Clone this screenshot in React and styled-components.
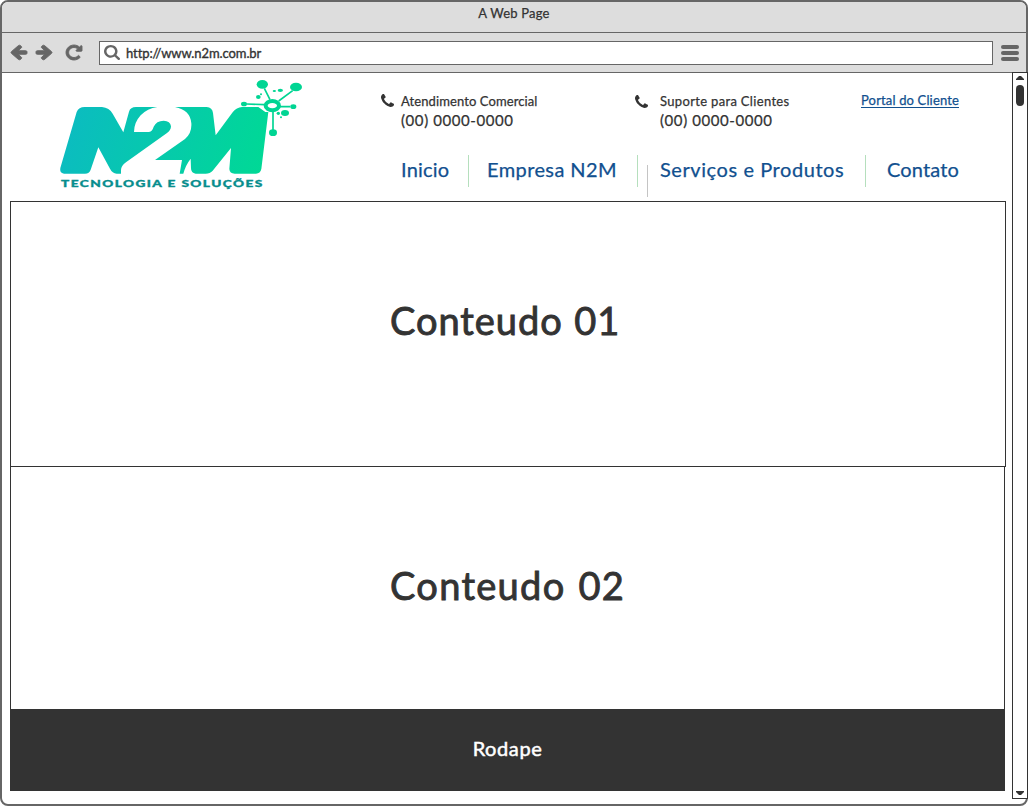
import React from "react";
import styled, { createGlobalStyle } from "styled-components";

const INK = "#333333";
const CHROME = "#666666";
const LINK = "#11508f";

const GlobalStyle = createGlobalStyle`
  * { box-sizing: border-box; }
  body { margin: 0; background: #fff; font-family: Lato, "Liberation Sans", sans-serif; color: ${INK}; }
`;

const Window = styled.div`
  width: 1028px;
  height: 806px;
  display: flex;
  flex-direction: column;
  border: 2px solid ${CHROME};
  border-radius: 8px;
  background: #fff;
`;

const Text = styled.span`
  display: block;
  white-space: nowrap;
  font-size: ${(p) => p.$size}px;
  line-height: ${(p) => p.$line || p.$size}px;
  letter-spacing: ${(p) => p.$track || 0}px;
  word-spacing: ${(p) => p.$word || 0}px;
  -webkit-text-stroke: ${(p) => p.$stroke || 0.25}px currentColor;
`;

const TitleBar = styled.header`
  flex: none;
  height: 31px;
  padding: 2px 0 0 0;
  display: flex;
  justify-content: center;
  background: #ddd;
  border-bottom: 1px solid ${CHROME};
  border-radius: 6px 6px 0 0;
`;

const Toolbar = styled.div`
  flex: none;
  height: 40px;
  display: flex;
  align-items: center;
  padding-left: 9px;
  background: #ddd;
  border-bottom: 1px solid ${CHROME};
`;

const NavIcons = styled.div`
  width: 88px;
  display: flex;
  align-items: center;
  gap: 9px;
  svg { overflow: visible; }
  svg:last-child { margin-left: 5px; }
`;

const AddressBar = styled.div`
  width: 894px;
  height: 24px;
  display: flex;
  align-items: center;
  gap: 6px;
  padding-left: 4px;
  border: 1px solid ${CHROME};
  background: #fff;
  svg { overflow: visible; }
`;

const MenuButton = styled.div`
  margin-left: 8px;
  display: grid;
  gap: 2px;
`;

const MenuBar = styled.i`
  width: 18px;
  height: 4px;
  border-radius: 2px;
  background: ${CHROME};
`;

const Viewport = styled.div`
  flex: 1;
  display: flex;
  justify-content: space-between;
  min-height: 0;
`;

const Page = styled.main`
  width: 996px;
  margin-left: 8px;
  display: flex;
  flex-direction: column;
`;

const SiteHeader = styled.div`
  flex: none;
  height: 128px;
  display: flex;
`;

const Brand = styled.div`
  width: 371px;
  padding: 1px 0 0 40px;
  svg { display: block; }
`;

const HeaderBody = styled.div`
  flex: 1;
  display: flex;
  flex-direction: column;
`;

const ContactRow = styled.div`
  height: 82px;
  padding-top: 19px;
  display: flex;
  align-items: flex-start;
`;

const Contact = styled.div`
  width: ${(p) => p.$width}px;
  display: flex;
  gap: ${(p) => p.$gap}px;
  svg { flex: none; margin-top: ${(p) => p.$drop}px; }
`;

const PortalLink = styled.a`
  width: 98px;
  margin-top: 1px;
  color: ${LINK};
  border-bottom: 1px solid ${LINK};
`;

const Menu = styled.nav`
  display: flex;
  align-items: flex-start;
  padding-left: 20px;
  color: ${LINK};
`;

const MenuItem = styled.div`
  width: ${(p) => p.$width}px;
  padding-top: 2px;
`;

const Divider = styled.i`
  width: 1px;
  height: 32px;
  margin: ${(p) => p.$drop || 0}px ${(p) => p.$after}px 0 0;
  background: ${(p) => p.$color || "#b5dfbd"};
`;

const Section = styled.section`
  flex: none;
  width: ${(p) => p.$width}px;
  height: ${(p) => p.$height}px;
  padding: ${(p) => p.$top}px 0 0 379px;
  border: 1px solid ${INK};
  border-bottom-width: ${(p) => (p.$open ? 0 : 1)}px;
  border-top-width: ${(p) => (p.$open ? 0 : 1)}px;
`;

const Footer = styled.footer`
  flex: none;
  width: 995px;
  height: 82px;
  display: flex;
  justify-content: center;
  padding-top: 27px;
  background: ${INK};
  color: #fff;
`;

const ScrollBar = styled.div`
  width: 16px;
  height: 727px;
  margin: -1px -2px 0 0;
  display: flex;
  flex-direction: column;
  align-items: center;
  padding: 3px 0;
  border: 1px solid ${INK};
  background: #fff;
`;

const Thumb = styled.div`
  width: 8px;
  height: 21px;
  margin: 5px 0 auto;
  border-radius: 4px;
  background: ${INK};
`;

const Glyph = ({ path, box, size, height, flip, weight = 0 }) => (
  <svg width={size} height={height || size} viewBox={box} preserveAspectRatio="none" fill={CHROME} stroke={CHROME} strokeWidth={weight}>
    <path d={path} transform={flip} />
  </svg>
);

const ARROW = "M1472 736v128q0 53-32.5 90.5t-84.5 37.5h-704l293 294q38 36 38 90t-38 90l-75 76q-37 37-90 37-52 0-91-37l-651-652q-37-37-37-90 0-52 37-91l651-650q38-38 91-38 52 0 90 38l75 74q38 38 38 91t-38 91l-293 293h704q52 0 84.5 37.5t32.500 90.500z";
const RELOAD = "M1536 128v448q0 26-19 45t-45 19h-448q-42 0-59-40-17-39 14-69l138-138q-148-137-349-137-104 0-198.500 40.500t-163.500 109.500-109.500 163.500-40.500 198.500 40.500 198.500 109.500 163.500 163.500 109.500 198.500 40.500q119 0 225-52t179-147q7-10 23-12 14 0 25 9l137 138q9 8 9.500 20.500t-7.500 22.500q-109 132-264 204.500t-327 72.500q-156 0-298-61t-245-164-164-245-61-298 61-298 164-245 245-164 298-61q147 0 284.500 55.500t244.500 156.500l130-129q29-31 70-14 39 17 39 59z";
const SEARCH = "M1152 704q0-185-131.500-316.500t-316.500-131.500-316.500 131.500-131.500 316.500 131.500 316.500 316.500 131.500 316.500-131.500 131.500-316.500zm512 832q0 52-38 90t-90 38q-54 0-90-38l-343-342q-179 124-399 124-143 0-273.500-55.500t-225-150-150-225-55.500-273.500 55.500-273.500 150-225 225-150 273.500-55.500 273.500 55.500 225 150 150 225 55.500 273.500q0 220-124 399l343 343q37 37 37 90z";
const PHONE = "M1408 1112q0 27-10 70.500t-21 68.500q-21 50-122 106-94 51-186 51-27 0-52.500-3.500t-57.500-12.500-47.500-14.500-55.500-20.500-49-18q-98-35-175-83-128-79-264.500-215.500t-215.500-264.500q-48-77-83-175-3-9-18-49t-20.500-55.500-14.500-47.500-12.500-57.500-3.500-52.500q0-92 51-186 56-101 106-122 25-11 68.500-21t70.500-10q14 0 21 3 18 6 53 76 11 19 30 54t35 63.500 31 53.500q3 4 17.500 25t21.500 35.500 7 28.500q0 20-28.500 50t-62 55-62 53-28.500 46q0 9 5 22.500t8.500 20.500 14 24 11.500 19q76 137 174 235t235 174q2 1 19 11.500t24 14 20.500 8.500 22.500 5q18 0 46-28.500t53-62 55-62 50-28.500q14 0 28.500 7t35.500 21.500 25 17.500q25 15 53.500 31t63.500 35 54 30q70 35 76 53 3 7 3 21z";

const PhoneIcon = () => (
  <svg width="13" height="13" viewBox="0 0 1408 1408" fill={INK}><path d={PHONE} /></svg>
);

const Triangle = ({ down }) => (
  <svg width="8" height="4" viewBox="0 0 8 4" fill={INK}><path d={down ? "M0 0H8V1L5 4H3L0 1Z" : "M0 4H8V3L5 0H3L0 3Z"} /></svg>
);

const Logo = () => (
  <svg width="260" height="120" viewBox="0 0 780 360">
    <defs>
      <linearGradient id="brand" gradientUnits="userSpaceOnUse" x1="60" y1="130" x2="640" y2="300">
        <stop offset="0" stopColor="#0bbcc0" />
        <stop offset="1" stopColor="#00d995" />
      </linearGradient>
    </defs>
    <g fill="url(#brand)">
      <path d="M80 114Q86 99 104 99H156Q178 101 188 119L220 175L237 113Q241 99 258 99H322Q292 103 272 124Q252 146 252 174H297Q307 172 311 158Q319 140 341 140Q361 141 363 157Q363 169 350 178L228 265Q213 276 213 288V299H200Q187 298 180 284L145 220L122 287Q118 299 105 299H42Q28 297 31 282Z" />
      <path d="M375 99H470Q487 101 489 117L497 184L548 115Q560 100 576 99H625L646 114H655L634 285Q631 299 618 299H554Q539 299 538 285L543 222L488 290Q480 299 467 299H437Q423 298 423 283L422 254Q407 273 400 299H389L396 258H315L405 195Q426 177 424 148Q421 108 375 99Z" />
    </g>
    <g fill="#00d593">
      <ellipse cx="637" cy="31" rx="17" ry="13" />
      <ellipse cx="738" cy="39" rx="18" ry="13" />
      <ellipse cx="582" cy="90" rx="9" ry="7" />
      <ellipse cx="730" cy="98" rx="9" ry="7" />
      <ellipse cx="669" cy="176" rx="12" ry="10" />
      <ellipse cx="705" cy="117" rx="12" ry="9" />
      <ellipse cx="691" cy="49" rx="8" ry="5" />
      <ellipse cx="673" cy="51" rx="5" ry="3" />
      <ellipse cx="625" cy="69" rx="7" ry="6" />
      <circle cx="633" cy="61" r="3" />
      <circle cx="685" cy="118" r="5" />
      <circle cx="693" cy="130" r="3" />
    </g>
    <path d="M643 43L660 77M728 50L686 81M590 90L643 92M690 98H721M669 112V168" fill="none" stroke="#00d593" strokeWidth="5" />
    <ellipse cx="667" cy="95" rx="20" ry="14" fill="#fff" stroke="#00d593" strokeWidth="12" />
    <text x="33" y="338" textLength="608" lengthAdjust="spacingAndGlyphs" letterSpacing="3" fontFamily="Lato" fontWeight="900" fontSize="29" fill="#078d8d" stroke="#078d8d" strokeWidth="1">TECNOLOGIA E SOLUÇÕES</text>
  </svg>
);

export default function App() {
  return (
    <Window>
      <GlobalStyle />
      <TitleBar><Text $size={13} $line={18} $track={0.2}>A Web Page</Text></TitleBar>
      <Toolbar>
        <NavIcons>
          <Glyph path={ARROW} box="0 0 1472 1600" size={16} height={15} weight={90} />
          <Glyph path={ARROW} box="0 0 1472 1600" size={16} height={15} weight={90} flip="translate(1472 0) scale(-1 1)" />
          <Glyph path={RELOAD} box="0 0 1536 1536" size={16} height={15} weight={90} />
        </NavIcons>
        <AddressBar>
          <Glyph path={SEARCH} box="0 0 1664 1664" size={16} height={15} />
          <Text $size={13} $line={20} $track={-0.09} $stroke={0.35}>http://www.n2m.com.br</Text>
        </AddressBar>
        <MenuButton><MenuBar /><MenuBar /><MenuBar /></MenuButton>
      </Toolbar>
      <Viewport>
        <Page>
          <SiteHeader>
            <Brand><Logo /></Brand>
            <HeaderBody>
              <ContactRow>
                <Contact $width={254} $gap={7} $drop={2}>
                  <PhoneIcon />
                  <div>
                    <Text $size={13} $line={18} $track={0.1}>Atendimento Comercial</Text>
                    <Text $size={15} $line={20} $track={0.58}>(00) 0000-0000</Text>
                  </div>
                </Contact>
                <Contact $width={226} $gap={12} $drop={3}>
                  <PhoneIcon />
                  <div>
                    <Text $size={13} $line={18} $track={0.33}>Suporte para Clientes</Text>
                    <Text $size={15} $line={20} $track={0.58}>(00) 0000-0000</Text>
                  </div>
                </Contact>
                <PortalLink><Text $size={13} $line={14} $track={0.15}>Portal do Cliente</Text></PortalLink>
              </ContactRow>
              <Menu>
                <MenuItem $width={67}><Text $size={20} $line={25} $track={0.2}>Inicio</Text></MenuItem>
                <Divider $after={18} />
                <MenuItem $width={150}><Text $size={20} $line={25} $track={0.4}>Empresa N2M</Text></MenuItem>
                <Divider $after={9} />
                <Divider $after={12} $drop={10} $color="#c4c4c4" />
                <MenuItem $width={205}><Text $size={20} $line={25} $track={0.57}>Serviços e Produtos</Text></MenuItem>
                <Divider $after={21} />
                <MenuItem $width={72}><Text $size={20} $line={25} $track={0.15}>Contato</Text></MenuItem>
              </Menu>
            </HeaderBody>
          </SiteHeader>
          <Section $width={996} $height={266} $top={93}><Text $size={38} $line={50} $track={0.95} $word={1} $stroke={0.9}>Conteudo 01</Text></Section>
          <Section $width={995} $height={242} $top={93} $open><Text $size={38} $line={50} $track={1.3} $word={2} $stroke={0.9}>Conteudo 02</Text></Section>
          <Footer><Text $size={20} $line={24} $track={0.6} $stroke={0.5}>Rodape</Text></Footer>
        </Page>
        <ScrollBar><Triangle /><Thumb /><Triangle down /></ScrollBar>
      </Viewport>
    </Window>
  );
}
